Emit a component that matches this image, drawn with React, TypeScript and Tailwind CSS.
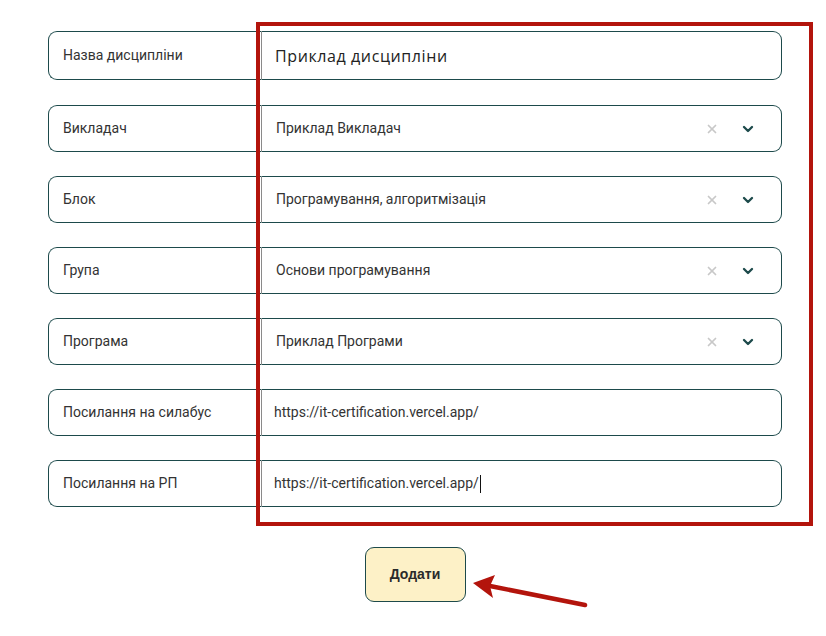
import { X, ChevronDown } from "lucide-react";

const rows = [
  { label: "Викладач", value: "Приклад Викладач", select: true },
  { label: "Блок", value: "Програмування, алгоритмізація", select: true },
  { label: "Група", value: "Основи програмування", select: true },
  { label: "Програма", value: "Приклад Програми", select: true },
  { label: "Посилання на силабус", value: "https://it-certification.vercel.app/", select: false },
  { label: "Посилання на РП", value: "https://it-certification.vercel.app/", select: false, caret: true },
];

function Row({ label, children, tall, pl = "pl-[14px]" }: { label: string; children: React.ReactNode; tall?: boolean; pl?: string }) {
  return (
    <div className={`flex ${tall ? "h-[49px] mb-px" : "h-[47px]"}`}>
      <div className="w-[213px] shrink-0 flex items-center pl-[14px] border border-r-0 border-[#1d4a4b] rounded-l-[9px] text-[14px] text-[#333]">
        {label}
      </div>
      <div className={`flex-1 flex items-center border border-[#1d4a4b] border-l-[#8a8a8a] rounded-r-[9px] pr-[25px] ${pl}`}>
        {children}
      </div>
    </div>
  );
}

export default function App() {
  return (
    <div className="relative w-[826px] h-[636px] bg-white font-['Roboto',sans-serif] overflow-hidden">
      <div className="w-[734px] ml-[48px] pt-[31px] flex flex-col gap-[24px]">
        <Row label="Назва дисципліни" tall pl="pl-[13px]">
          <span className="text-[16px] text-[#222] font-['Open_Sans',sans-serif] tracking-[0.6px]">Приклад дисципліни</span>
        </Row>
        {rows.map((r) => (
          <Row key={r.label} label={r.label} pl={r.select ? "pl-[14px]" : "pl-[12px]"}>
            <span className="flex-1 text-[14px] text-[#333] flex items-center">
              {r.value}
              {r.caret && <span className="inline-block w-px h-[18px] bg-[#111] ml-px" />}
            </span>
            {r.select && (
              <div className="flex items-center gap-[21px]">
                <X className="w-[14px] h-[14px] text-[#c8c8c8]" strokeWidth={3} />
                <ChevronDown className="w-[16px] h-[16px] text-[#1d4a4b]" strokeWidth={3.5} />
              </div>
            )}
          </Row>
        ))}
        <div className="flex justify-center pt-[16px]">
          <button className="w-[101px] h-[55px] rounded-[9px] border border-[#1d4a4b] bg-[#fdf1c7] text-[14px] font-semibold text-[#2a2a2a] font-['Liberation_Sans',sans-serif]">
            Додати
          </button>
        </div>
      </div>
      <div className="absolute left-[256px] top-[22px] w-[557px] h-[504px] border-[4px] border-[#b3140c]" />
      <svg className="absolute left-[468px] top-[572px]" width="124" height="40" viewBox="0 0 124 40">
        <path d="M117 33 L22 14" stroke="#b3140c" strokeWidth="4.5" strokeLinecap="round" />
        <path d="M5 11 L27 3 L22 14 L25 26 Z" fill="#b3140c" />
      </svg>
    </div>
  );
}
